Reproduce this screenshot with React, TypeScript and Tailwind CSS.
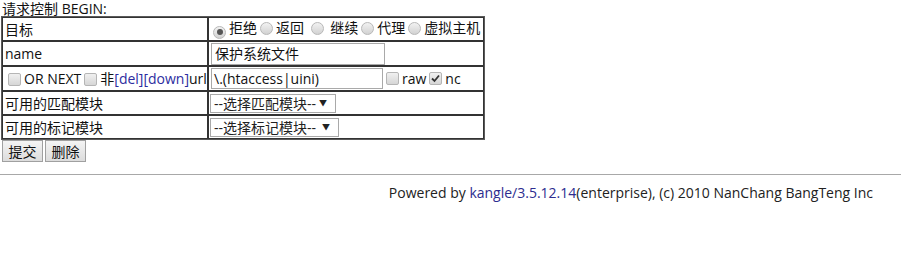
import React from 'react';

const FONT = "font-['Open_Sans','Noto_Sans_CJK_SC',sans-serif]";

function Check({ checked = false }: { checked?: boolean }) {
  return (
    <span className="relative inline-block w-[13px] h-[13px] align-[-2px] mx-[3px] border border-[#b5b5b5] rounded-[2px] bg-gradient-to-b from-[#f0f0f0] to-[#d6d6d6]">
      {checked && (
        <svg viewBox="0 0 13 13" className="absolute left-[-1px] top-[-1px] w-[13px] h-[13px]">
          <path d="M3 6.5 L5.5 9 L10 3.5" fill="none" stroke="#333" strokeWidth="1.8" />
        </svg>
      )}
    </span>
  );
}

function Radio({ checked = false }: { checked?: boolean }) {
  return (
    <span className="relative inline-flex items-center justify-center w-[13px] h-[13px] align-[-2px] mx-[3px] border border-[#b8b8b8] rounded-full bg-gradient-to-b from-[#f2f2f2] to-[#d2d2d2]">
      {checked && <span className="w-[6px] h-[6px] rounded-full bg-[#555]" />}
    </span>
  );
}

function Select({ label, width }: { label: string; width: string }) {
  return (
    <span className={`inline-flex items-center justify-between h-[19px] border border-[#a9a9a9] bg-white pl-[3px] pr-[8px] text-[#222] ${width}`}>
      <span>{label}</span>
      <span className="text-[8px] leading-none">▼</span>
    </span>
  );
}

const rows: { label: React.ReactNode; value: React.ReactNode; h: string }[] = [
  {
    label: '目标',
    h: 'h-[24px]',
    value: (
      <span className="whitespace-nowrap">
        <Radio checked />拒绝<Radio />返回 <Radio /> 继续<Radio />代理<Radio />虚拟主机
      </span>
    ),
  },
  {
    label: 'name',
    h: 'h-[25px]',
    value: (
      <span className="inline-flex items-center w-[174px] h-[22px] border border-[#a9a9a9] px-[3px] ml-[1px]">保护系统文件</span>
    ),
  },
  {
    label: (
      <span className="whitespace-nowrap">
        <Check />OR NEXT<Check />非<span className="text-[#2d2da0]">[del][down]</span>url
      </span>
    ),
    h: 'h-[25px]',
    value: (
      <span className="inline-flex items-center whitespace-nowrap">
        <span className="inline-flex items-center w-[172px] h-[21px] border border-[#a9a9a9] px-[2px] ml-[1px]">\.(htaccess|uini)</span>
        <Check />raw<Check checked />nc
      </span>
    ),
  },
  {
    label: '可用的匹配模块',
    h: 'h-[24px]',
    value: <Select label="--选择匹配模块--" width="w-[126px]" />,
  },
  {
    label: '可用的标记模块',
    h: 'h-[24px]',
    value: <Select label="--选择标记模块--" width="w-[129px]" />,
  },
];

export default function App() {
  return (
    <div className={`w-[901px] h-[272px] bg-white text-[14px] leading-[17px] text-[#111] ${FONT}`}>
      <div className="pl-[2px] h-[16px] leading-[17px] overflow-visible">请求控制 BEGIN:</div>
      <table className="ml-[1px] border-separate border-spacing-0 border border-[#5a5a5a]">
        <tbody>
          {rows.map((r, i) => (
            <tr key={i}>
              <td className={`w-[206px] border border-[#333] p-0 pl-[2px] align-middle ${r.h}`}>{r.label}</td>
              <td className={`w-[276px] border border-[#333] p-0 pl-[1px] align-middle ${r.h}`}>{r.value}</td>
            </tr>
          ))}
        </tbody>
      </table>
      <div className="flex gap-[2px] pl-[2px]">
        <button className="w-[41px] h-[22px] border border-[#a0a0a0] bg-gradient-to-b from-[#f4f4f4] to-[#dcdcdc] text-[#111]">提交</button>
        <button className="w-[41px] h-[22px] border border-[#a0a0a0] bg-gradient-to-b from-[#f4f4f4] to-[#dcdcdc] text-[#111]">删除</button>
      </div>
      <hr className="mt-[12px] border-0 border-t border-[#a8a8a8]" />
      <div className="text-right pr-[28px] pt-[9px] text-[#222]">
        Powered by <span className="text-[#2d2d8f]">kangle/3.5.12.14</span>(enterprise), (c) 2010 NanChang BangTeng Inc
      </div>
    </div>
  );
}
